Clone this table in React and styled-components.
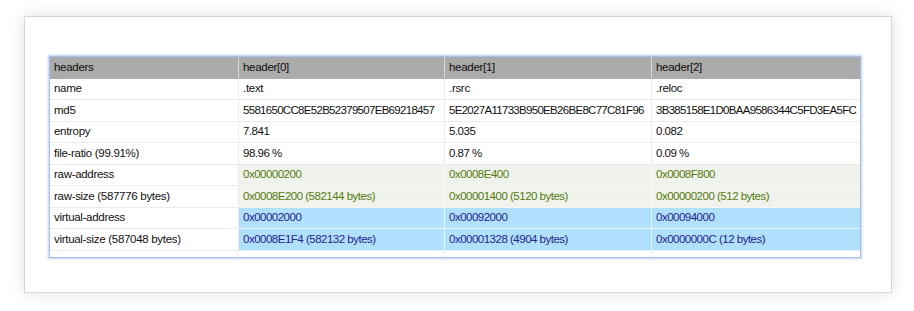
import React from 'react';
import styled, { createGlobalStyle } from 'styled-components';

const GlobalStyle = createGlobalStyle`
  html, body {
    margin: 0;
    padding: 0;
    background: #ffffff;
  }
  body {
    font-family: "Liberation Sans", Arial, sans-serif;
  }
`;

const Page = styled.div`
  width: 914px;
  height: 311px;
  box-sizing: border-box;
  padding: 16px 22px 0 24px;
`;

const Card = styled.div`
  box-sizing: border-box;
  height: 277px;
  background: #ffffff;
  border: 1px solid #d6d6d6;
  box-shadow: 0 0 14px rgba(0, 0, 0, 0.13);
  padding: 39px 30px 34px 24px;
`;

const Table = styled.div`
  display: grid;
  grid-template-columns: 189px 206px 207px 1fr;
  border: 1px solid #aac0ea;
  box-shadow: 0 0 2px 1px rgba(165, 190, 236, 0.75);
  background: #ffffff;
  font-size: 11.5px;
  color: #111111;
`;

const tones = {
  head: { bg: '#ababab', fg: '#0d0d0d', line: '#d9d9d9', rule: '#ababab' },
  plain: { bg: '#ffffff', fg: '#111111', line: '#ebebeb', rule: '#ebebeb' },
  raw: { bg: '#eff3ec', fg: '#557a0e', line: '#ffffff', rule: '#f6f8f4' },
  virt: { bg: '#b1e0fc', fg: '#23238f', line: '#e6f4fd', rule: '#e6f4fd' },
};

const Cell = styled.div`
  box-sizing: border-box;
  height: 21.5px;
  display: flex;
  align-items: center;
  padding: 0 0 1px 4px;
  white-space: nowrap;
  overflow: hidden;
  background: ${(p) => tones[p.$tone].bg};
  color: ${(p) => tones[p.$tone].fg};
  border-bottom: 1px solid ${(p) => tones[p.$tone].rule};
  border-right: 1px solid ${(p) => tones[p.$tone].line};
  letter-spacing: ${(p) => p.$spacing}px;
  &:nth-child(4n) {
    border-right: none;
  }
`;

const Filler = styled.div`
  height: 6px;
  border-right: 1px solid #ebebeb;
  &:last-child {
    border-right: none;
  }
`;

// spacing: digit-heavy values sit tighter than the labels
const rows = [
  { tone: 'head', spacing: -0.3, cells: ['headers', 'header[0]', 'header[1]', 'header[2]'] },
  { tone: 'plain', spacing: -0.3, cells: ['name', '.text', '.rsrc', '.reloc'] },
  {
    tone: 'plain',
    spacing: -0.7,
    cells: [
      'md5',
      '5581650CC8E52B52379507EB69218457',
      '5E2027A11733B950EB26BE8C77C81F96',
      '3B385158E1D0BAA9586344C5FD3EA5FC',
    ],
  },
  { tone: 'plain', spacing: -0.5, cells: ['entropy', '7.841', '5.035', '0.082'] },
  { tone: 'plain', spacing: -0.5, cells: ['file-ratio (99.91%)', '98.96 %', '0.87 %', '0.09 %'] },
  { tone: 'raw', spacing: -0.5, cells: ['raw-address', '0x00000200', '0x0008E400', '0x0008F800'] },
  {
    tone: 'raw',
    spacing: -0.5,
    cells: [
      'raw-size (587776 bytes)',
      '0x0008E200 (582144 bytes)',
      '0x00001400 (5120 bytes)',
      '0x00000200 (512 bytes)',
    ],
  },
  { tone: 'virt', spacing: -0.5, cells: ['virtual-address', '0x00002000', '0x00092000', '0x00094000'] },
  {
    tone: 'virt',
    spacing: -0.5,
    cells: [
      'virtual-size (587048 bytes)',
      '0x0008E1F4 (582132 bytes)',
      '0x00001328 (4904 bytes)',
      '0x0000000C (12 bytes)',
    ],
  },
];

export default function App() {
  return (
    <>
      <GlobalStyle />
      <Page>
        <Card>
          <Table>
            {rows.map((row, r) =>
              row.cells.map((text, c) => {
                const label = c === 0 && row.tone !== 'head';
                return (
                  <Cell
                    key={`${r}-${c}`}
                    $tone={label ? 'plain' : row.tone}
                    $spacing={label ? -0.3 : row.spacing}
                  >
                    {text}
                  </Cell>
                );
              })
            )}
            <Filler />
            <Filler />
            <Filler />
            <Filler />
          </Table>
        </Card>
      </Page>
    </>
  );
}
